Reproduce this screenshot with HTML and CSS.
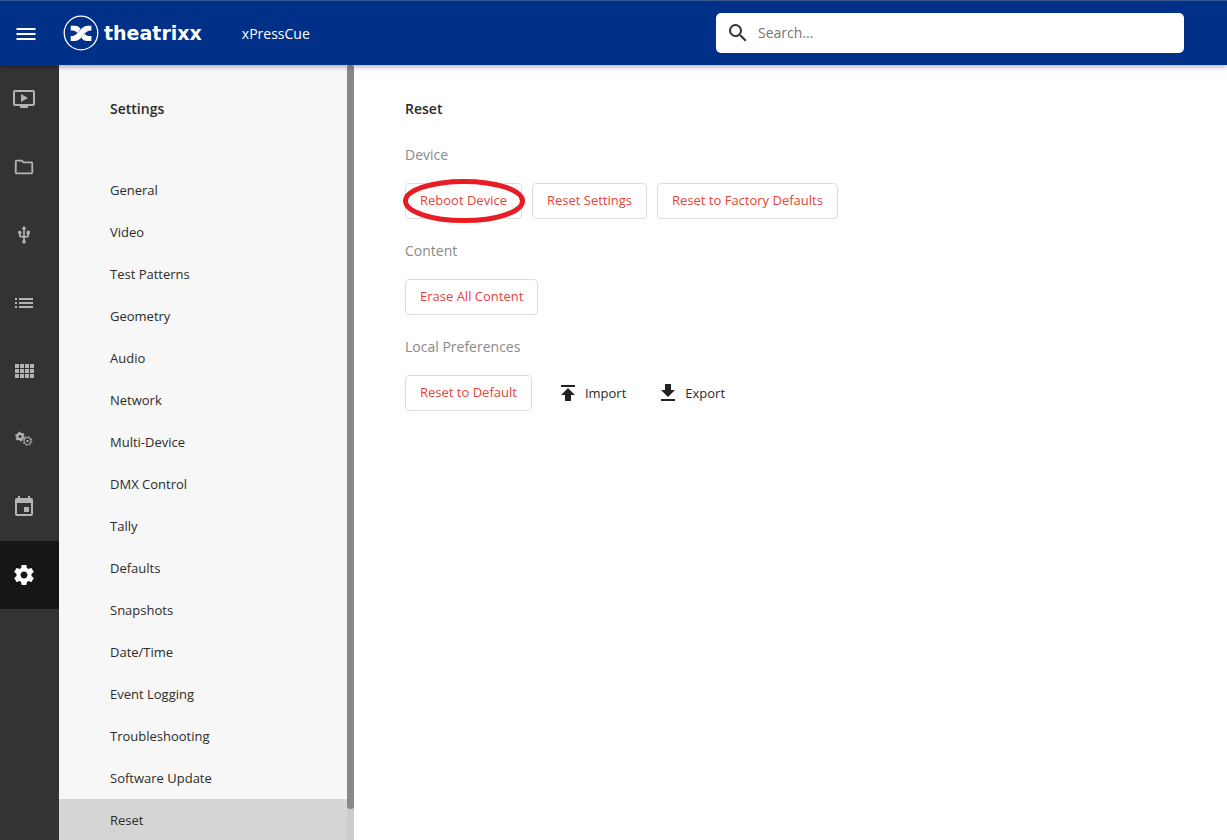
FILE: index.html
```html
<!DOCTYPE html>
<html lang="en">
<head>
    <meta charset="UTF-8">
    <meta name="viewport" content="width=device-width, initial-scale=1">
    <title>xPressCue</title>
    <link rel="stylesheet" href="styles.css">
</head>
<body>
    <!-- Top bar -->
    <header class="topbar">
        <button class="menu-btn" type="button" aria-label="Menu">
            <svg width="24" height="24" viewBox="0 0 24 24"><path d="M2.500 7h19v2h-19zM2.500 12h19v2h-19zM2.500 17h19v2h-19z"/></svg>
        </button>
        <a class="brand" href="#">
            <svg class="brand-mark" width="36" height="36" viewBox="0 0 36 36">
                <circle cx="18" cy="18" r="16.800" fill="none" stroke="#fff" stroke-width="1.300"/>
                <path fill="#fff" d="M7.700 10.700h4.300c2.500 0 4 .8 5.700 3.200L14.500 18c-1.800-1.900-3.300-2.400-6.800-2.400z"/>
                <path fill="#fff" d="M28.400 26h-4.300c-2.500 0-4-.8-5.700-3.200l3.200-4.100c1.800 1.900 3.300 2.400 6.800 2.400z"/>
                <path fill="#fff" d="M7.700 21c4.300 0 6.300-2.200 9-5.300 2.800-3.500 4.800-5 8.300-5h3.400v4.900c-4 0-6 2-8.600 5.400-2.800 3.500-4.800 5-8.800 5H7.700z"/>
            </svg>
            <span class="brand-name">theatrixx</span>
        </a>
        <span class="product">xPressCue</span>
        <label class="search">
            <svg width="24" height="24" viewBox="0 0 24 24"><path d="M15.500 14h-.79l-.28-.27A6.471 6.471 0 0 0 16 9.500 6.500 6.500 0 1 0 9.500 16c1.610 0 3.090-.59 4.230-1.570l.27.28v.79l5 4.990L20.490 19l-4.990-5zm-6 0C7.010 14 5 11.990 5 9.500S7.010 5 9.500 5 14 7.010 14 9.500 11.990 14 9.500 14z"/></svg>
            <input type="text" placeholder="Search..." aria-label="Search">
        </label>
    </header>

    <div class="layout">
        <!-- Icon rail -->
        <nav class="rail" aria-label="Main">
            <a href="#" aria-label="Player"><svg width="24" height="24" viewBox="0 0 24 24"><path d="M21 3H3c-1.110 0-2 .89-2 2v12c0 1.100.89 2 2 2h5v2h8v-2h5c1.100 0 2-.9 2-2V5c0-1.110-.9-2-2-2zm0 14H3V5h18v12zM9 7v8l7-4z"/></svg></a>
            <a href="#" aria-label="Files"><svg width="22" height="22" viewBox="0 0 24 24"><path d="M9.170 6l2 2H20v10H4V6h5.170M10 4H4c-1.100 0-1.990.9-1.990 2L2 18c0 1.100.9 2 2 2h16c1.100 0 2-.9 2-2V8c0-1.100-.9-2-2-2h-8l-2-2z"/></svg></a>
            <a href="#" aria-label="USB"><svg width="20" height="20" viewBox="0 0 24 24"><path d="M15 7v4h1v2h-3V5h2l-3-4-3 4h2v8H8v-2.070c.7-.37 1.200-1.080 1.200-1.930 0-1.210-.99-2.200-2.200-2.200S4.800 7.790 4.800 9c0 .85.5 1.560 1.200 1.930V13c0 1.110.89 2 2 2h3v3.050c-.71.37-1.200 1.100-1.200 1.950a2.200 2.200 0 0 0 4.400 0c0-.85-.49-1.580-1.200-1.950V15h3c1.110 0 2-.89 2-2v-2h1V7h-4z"/></svg></a>
            <a href="#" aria-label="Lists"><svg width="24" height="24" viewBox="0 0 24 24"><path d="M3 13h2v-2H3v2zm0 4h2v-2H3v2zm0-8h2V7H3v2zm4 4h14v-2H7v2zm0 4h14v-2H7v2zM7 7v2h14V7H7z"/></svg></a>
            <a href="#" aria-label="Grid"><svg width="24" height="24" viewBox="0 0 24 24"><path d="M3 5h4v4H3zM8 5h4v4H8zM13 5h4v4h-4zM18 5h4v4h-4zM3 10h4v4H3zM8 10h4v4H8zM13 10h4v4h-4zM18 10h4v4h-4zM3 15h4v4H3zM8 15h4v4H8zM13 15h4v4h-4zM18 15h4v4h-4z"/></svg></a>
            <a href="#" aria-label="Automation"><svg width="24" height="24" viewBox="0 0 24 24"><circle cx="8" cy="9.500" r="2.700" fill="none" stroke="#b4b2b2" stroke-width="2.200"/><circle cx="8" cy="9.500" r="4.200" fill="none" stroke="#b4b2b2" stroke-width="1.300" stroke-dasharray="2.200 2.198"/><circle cx="15.500" cy="14" r="3.500" fill="none" stroke="#b4b2b2" stroke-width="1"/><circle cx="15.500" cy="14" r="4.400" fill="none" stroke="#b4b2b2" stroke-width="1" stroke-dasharray="1.728 1.728"/><circle cx="15.500" cy="14" r="1.200"/></svg></a>
            <a href="#" aria-label="Calendar"><svg width="24" height="24" viewBox="0 0 24 24"><path d="M17 12h-5v5h5v-5zM16 1v2H8V1H6v2H5c-1.110 0-1.990.9-1.990 2L3 19c0 1.100.89 2 2 2h14c1.100 0 2-.9 2-2V5c0-1.100-.9-2-2-2h-1V1h-2zm3 18H5V8h14v11z"/></svg></a>
            <a class="active" href="#" aria-label="Settings"><svg width="24" height="24" viewBox="0 0 24 24"><path d="M19.430 12.980c.04-.32.070-.64.070-.98s-.03-.66-.07-.98l2.110-1.650c.19-.15.24-.42.12-.64l-2-3.460c-.12-.22-.39-.3-.61-.22l-2.490 1c-.52-.4-1.080-.73-1.690-.98l-.38-2.650C14.460 2.180 14.250 2 14 2h-4c-.25 0-.46.18-.49.42l-.38 2.650c-.61.25-1.170.59-1.690.98l-2.490-1c-.23-.09-.49 0-.61.22l-2 3.460c-.13.22-.07.49.12.64l2.110 1.650c-.04.32-.07.65-.07.98s.03.66.07.98l-2.110 1.650c-.19.15-.24.42-.12.64l2 3.460c.12.22.39.3.61.22l2.490-1c.52.4 1.080.73 1.690.98l.38 2.650c.03.24.24.42.49.42h4c.25 0 .46-.18.49-.42l.38-2.650c.61-.25 1.170-.59 1.690-.98l2.490 1c.23.09.49 0 .61-.22l2-3.460c.12-.22.070-.49-.12-.64l-2.110-1.650zM12 15.500c-1.930 0-3.500-1.570-3.500-3.500s1.570-3.500 3.500-3.500 3.500 1.570 3.500 3.500-1.570 3.500-3.500 3.500z"/></svg></a>
        </nav>

        <!-- Settings menu -->
        <aside class="settings">
            <nav class="settings-list" aria-label="Settings">
                <h2>Settings</h2>
                <a href="#">General</a>
                <a href="#">Video</a>
                <a href="#">Test Patterns</a>
                <a href="#">Geometry</a>
                <a href="#">Audio</a>
                <a href="#">Network</a>
                <a href="#">Multi-Device</a>
                <a href="#">DMX Control</a>
                <a href="#">Tally</a>
                <a href="#">Defaults</a>
                <a href="#">Snapshots</a>
                <a href="#">Date/Time</a>
                <a href="#">Event Logging</a>
                <a href="#">Troubleshooting</a>
                <a href="#">Software Update</a>
                <a class="active" href="#">Reset</a>
            </nav>
            <div class="scrollbar"><div class="thumb"></div></div>
        </aside>

        <!-- Reset page -->
        <main class="content">
            <h1>Reset</h1>

            <section>
                <h3>Device</h3>
                <div class="actions">
                    <div class="marked">
                        <button class="btn" type="button">Reboot Device</button>
                        <svg class="mark" viewBox="0 0 122 44"><ellipse cx="61" cy="22" rx="58.500" ry="19.500"/></svg>
                    </div>
                    <button class="btn" type="button">Reset Settings</button>
                    <button class="btn" type="button">Reset to Factory Defaults</button>
                </div>
            </section>

            <section>
                <h3>Content</h3>
                <div class="actions">
                    <button class="btn" type="button">Erase All Content</button>
                </div>
            </section>

            <section>
                <h3>Local Preferences</h3>
                <div class="actions">
                    <button class="btn" type="button">Reset to Default</button>
                    <div class="transfer">
                        <button class="btn-plain" type="button">
                            <svg width="14" height="18" viewBox="0 0 14 18"><path d="M0 1h14v2H0zM7 4l7 7h-4v6H4v-6H0z"/></svg>
                            Import
                        </button>
                        <button class="btn-plain" type="button">
                            <svg width="14" height="18" viewBox="0 0 14 18"><path d="M4 0h6v6h4l-7 7-7-7h4zM0 15h14v2H0z"/></svg>
                            Export
                        </button>
                    </div>
                </div>
            </section>
        </main>
    </div>
</body>
</html>
```

FILE: styles.css
```css
* {
    box-sizing: border-box;
}

body {
    margin: 0;
    height: 100vh;
    display: flex;
    flex-direction: column;
    overflow: hidden;
    font-family: "Open Sans", "Noto Sans", sans-serif;
    font-size: 13px;
    line-height: 24px;
    color: #2b2b2b;
    background: #fff;
}

a {
    color: inherit;
    text-decoration: none;
}

button {
    font: inherit;
    cursor: pointer;
}

svg {
    display: block;
    flex: none;
}

h1,
h2,
h3 {
    margin: 0;
    font-size: 14px;
    line-height: 24px;
}

/* Top bar */
.topbar {
    position: relative;
    z-index: 1;
    flex: none;
    display: flex;
    align-items: center;
    height: 65px;
    padding: 0 43px 0 14px;
    color: #fff;
    background: #003087;
    border-top: 1px solid #3c5a90;
    box-shadow: 0 1px 6px rgba(0, 0, 0, 0.4);
}

.menu-btn {
    padding: 0;
    border: none;
    background: none;
}

.menu-btn svg {
    fill: #fff;
}

.brand {
    display: flex;
    align-items: center;
    gap: 5px;
    margin-left: 25px;
}

.brand-name {
    font-family: "DejaVu Sans", sans-serif;
    font-size: 19px;
    font-weight: bold;
}

.product {
    margin-left: 40px;
    padding-top: 2px;
    font-size: 14px;
}

.search {
    display: flex;
    align-items: center;
    gap: 8px;
    width: 468px;
    height: 40px;
    margin-left: auto;
    padding: 0 10px;
    background: #fff;
    border-radius: 5px;
}

.search svg {
    fill: #333;
}

.search input {
    flex: 1;
    min-width: 0;
    padding: 0;
    border: none;
    outline: none;
    font: inherit;
    font-size: 14px;
    color: #333;
    background: none;
}

.search input::placeholder {
    color: #757575;
}

.layout {
    flex: 1;
    min-height: 0;
    display: flex;
}

/* Icon rail */
.rail {
    flex: none;
    width: 59px;
    background: #333;
}

.rail a {
    display: flex;
    align-items: center;
    justify-content: center;
    height: 68px;
    padding-right: 11px;
}

.rail svg {
    fill: #b4b2b2;
}

.rail .active {
    background: #161616;
}

.rail .active svg {
    fill: #fff;
}

/* Settings menu */
.settings {
    flex: none;
    display: flex;
    width: 295px;
    background: #f7f7f7;
}

.settings-list {
    flex: 1;
    padding-top: 32px;
    overflow: hidden;
}

.settings-list h2 {
    margin-bottom: 48px;
    padding-left: 51px;
    font-weight: 600;
}

.settings-list a {
    display: block;
    padding-left: 51px;
    line-height: 42px;
}

.settings-list .active {
    background: #d5d5d5;
}

.scrollbar {
    width: 7px;
    background: #ccc;
}

.thumb {
    height: 96%;
    border-radius: 4px;
    background: #888;
}

/* Reset page */
.content {
    flex: 1;
    padding: 32px 51px;
}

.content h1 {
    margin-bottom: 22px;
    font-weight: 600;
}

.content section {
    margin-bottom: 20px;
}

.content h3 {
    margin-bottom: 16px;
    font-weight: normal;
    color: #8a8a8a;
}

.actions {
    display: flex;
    align-items: center;
    gap: 10px;
}

.btn {
    height: 36px;
    padding: 0 14px 2px;
    color: #e2453c;
    background: #fff;
    border: 1px solid #ddd;
    border-radius: 4px;
}

.marked {
    position: relative;
}

.mark {
    position: absolute;
    top: -4px;
    left: -2px;
    width: 122px;
    height: 44px;
    fill: none;
    stroke: #e81c24;
    stroke-width: 5;
    pointer-events: none;
}

.transfer {
    display: flex;
    gap: 35px;
    margin-left: 19px;
}

.btn-plain {
    display: flex;
    align-items: center;
    gap: 10px;
    padding: 0;
    color: #2b2b2b;
    border: none;
    background: none;
}

.btn-plain svg {
    fill: #222;
}
```
